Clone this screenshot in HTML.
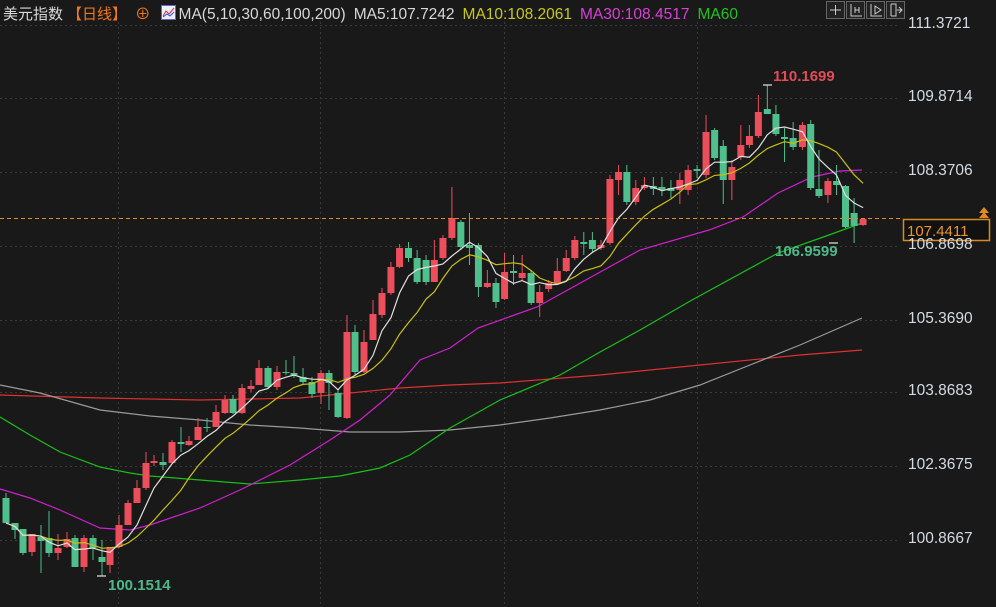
<!DOCTYPE html>
<html><head><meta charset="utf-8">
<style>
html,body{margin:0;padding:0;background:#191919;width:996px;height:607px;overflow:hidden;}
body{position:relative;font-family:"Liberation Sans","Noto Sans CJK SC",sans-serif;}
.hdr{position:absolute;left:3px;top:2px;font-size:15.5px;color:#d8d8d8;white-space:nowrap;letter-spacing:0;}
.hdr span{margin-right:8px}
.ax{position:absolute;left:908px;font-size:15.5px;color:#d4dbe2;}
</style></head><body>
<svg id="c" width="996" height="607" style="position:absolute;left:0;top:0">
<g stroke="#3a3a3a" stroke-dasharray="2,3" stroke-width="1">
<line x1="0" y1="25.5" x2="900" y2="25.5"/><line x1="0" y1="98.5" x2="900" y2="98.5"/>
<line x1="0" y1="172.5" x2="900" y2="172.5"/><line x1="0" y1="246.5" x2="900" y2="246.5"/>
<line x1="0" y1="320.5" x2="900" y2="320.5"/><line x1="0" y1="392.5" x2="900" y2="392.5"/>
<line x1="0" y1="466.5" x2="900" y2="466.5"/><line x1="0" y1="540.5" x2="900" y2="540.5"/>
<line x1="118.5" y1="22" x2="118.5" y2="607"/><line x1="320.5" y1="22" x2="320.5" y2="607"/>
<line x1="504.5" y1="22" x2="504.5" y2="607"/><line x1="697.5" y1="22" x2="697.5" y2="607"/>
</g>
<g id="ma" fill="none" stroke-width="1.2">
<polyline stroke="#e03030" points="0,395 100,398 200,400 300,398 400,388 450,385 500,383 600,375 700,365 800,355 862,350"/>
<polyline stroke="#9a9a9a" points="0,385 40,393 100,410 150,416 200,420 250,425 300,428 350,432 400,432 450,430 500,425 550,418 600,410 650,400 700,385 750,365 800,345 862,318"/>
<polyline stroke="#18c018" points="0,417 30,435 60,452 100,467 130,473 150,476 200,480 250,484 300,480 340,476 380,468 410,455 450,428 500,400 560,375 600,352 640,330 692,300 778,253 829,235 862,223"/>
<polyline stroke="#d020d0" points="0,489 30,498 60,510 100,528 130,530 150,525 200,508 240,490 290,465 330,440 360,420 390,395 420,360 450,348 478,328 537,307 640,250 709,230 743,217 778,193 812,177 840,171 862,170"/>
</g>
<g id="cd"></g>
<line x1="0" y1="218.5" x2="903" y2="218.5" stroke="#e08a20" stroke-dasharray="4,3" stroke-width="1"/>
<rect x="903.5" y="219.5" width="86" height="21" fill="#111" stroke="#d88a20" stroke-width="1.5"/>
<text x="907" y="236" font-family="Liberation Sans" font-size="15" fill="#e8962a">107.4411</text>
<path d="M979,213 L984,207 L989,213 Z M979,218 L984,212 L989,218 Z" fill="#e08a20"/>
<text x="773" y="81" font-family="Liberation Sans" font-size="15" font-weight="bold" fill="#e04c58">110.1699</text>
<text x="775" y="256" font-family="Liberation Sans" font-size="15" font-weight="bold" fill="#4fb88a">106.9599</text>
<text x="108" y="590" font-family="Liberation Sans" font-size="15" font-weight="bold" fill="#4fb88a">100.1514</text>
<path d="M763,85 H772 M838,243 H829 M97,576 H106" stroke="#ddd" stroke-width="1.2"/>
<g stroke="#666" fill="#222">
<rect x="826.5" y="1.5" width="18" height="17"/><rect x="846.5" y="1.5" width="18" height="17"/>
<rect x="866.5" y="1.5" width="18" height="17"/><rect x="886.5" y="1.5" width="18" height="17"/>
</g>
<g stroke="#ccc" stroke-width="1" fill="none">
<path d="M835.5,5 V15 M830,10 H841"/>
<path d="M851,4 V16 H862 M855,7 V13 M859,7 V13 M855,10 H859"/>
<path d="M871,4 V16 H882 M875,6 L881,10 L875,14 Z"/>
<path d="M891,4 V16 M891,4 H896 V16 H891 M897,10 H902 M899,7 L902,10 L899,13"/>
</g>
</svg>
<div class="hdr"><span style="font-size:15px">美元指数</span><span style="color:#f07818;margin-left:-4px;font-size:15px">【日线】</span><span style="color:#f07818;margin-right:10px">⊕</span><span style="display:inline-block;width:13px;height:13px;background:#eef;border:1px solid #66c;vertical-align:-1px;margin-right:3px;position:relative"><svg width="13" height="13" style="position:absolute;left:0;top:0"><path d="M1,10 L4,5 L7,8 L12,2" stroke="#e03030" fill="none"/><path d="M1,11 L5,8 L8,10 L12,6" stroke="#3050e0" fill="none"/></svg></span><span>MA(5,10,30,60,100,200)</span><span>MA5:107.7242</span><span style="color:#c8c818">MA10:108.2061</span><span style="color:#d840d8">MA30:108.4517</span><span style="color:#20c020">MA60</span></div>
<div class="ax" style="top:15px">111.3721</div>
<div class="ax" style="top:88px">109.8714</div>
<div class="ax" style="top:162px">108.3706</div>
<div class="ax" style="top:236px">106.8698</div>
<div class="ax" style="top:310px">105.3690</div>
<div class="ax" style="top:382px">103.8683</div>
<div class="ax" style="top:456px">102.3675</div>
<div class="ax" style="top:530px">100.8667</div>
<script>
var A=[[6,498,523,'g',493,523],[15,523,530,'g',523,539],[23,529,553,'g',529,555],[32,534,552,'r',534,556],[41,537,541,'g',525,573],[49,538,553,'g',511,557],[58,548,553,'r',534,560],[67,539,547,'r',532,548],[75,538,567,'g',535,567],[84,538,567,'r',535,572],[93,538,548,'g',535,560],[102,557,562,'g',540,576],[110,547,565,'r',547,573],[119,525,547,'r',515,548],[128,503,525,'r',500,525],[137,488,503,'r',480,503],[146,463,488,'r',452,490],[154,461,463,'r',455,466],[163,462,465,'g',453,470],[172,442,463,'r',440,463],[181,442,444,'g',427,452],[189,441,445,'r',436,446],[198,427,440,'r',418,440],[207,427,428,'g',418,432],[216,412,427,'r',405,427],[225,400,413,'r',395,414],[233,399,413,'g',395,414],[242,388,413,'r',384,414],[251,386,389,'r',380,392],[259,368,385,'r',360,385],[268,368,387,'g',366,389],[277,372,387,'r',366,390],[286,372,373,'g',360,375],[294,373,375,'g',356,378],[303,377,382,'g',368,385],[312,382,394,'g',377,398],[321,373,393,'r',370,404],[329,373,383,'g',370,410],[338,393,417,'g',390,418],[347,332,418,'r',315,419],[355,332,372,'g',325,375],[364,342,372,'r',330,373],[373,314,340,'r',300,340]];
var B=[[151,293,315,'r',288,318],[177,267,293,'r',262,295],[202,248,267,'r',244,268],[228,248,258,'g',242,262],[253,258,282,'g',250,284],[279,260,282,'g',255,285],[303,260,282,'r',240,282],[328,238,258,'r',235,260],[354,218,238,'r',187,240],[380,222,247,'g',220,250],[405,245,248,'g',213,265],[431,245,287,'g',243,297],[457,283,287,'r',270,288],[482,283,302,'g',278,308],[507,272,299,'r',253,300],[533,271,273,'g',255,285],[558,273,278,'r',255,280],[584,273,303,'g',270,305],[609,292,303,'r',285,317],[635,283,289,'r',280,292],[660,271,283,'r',258,285],[686,258,271,'r',250,272],[711,240,258,'r',236,260],[737,242,244,'g',232,255],[762,240,249,'g',232,252],[787,245,248,'r',240,250],[813,179,243,'r',175,245],[838,172,180,'r',165,195],[862,172,202,'g',165,205],[888,188,202,'r',180,205],[913,185,188,'r',177,190],[939,186,189,'g',177,195],[964,187,190,'g',177,196],[990,188,191,'g',180,198],[1016,180,190,'r',173,204],[1040,170,190,'r',165,195],[1066,169,171,'g',165,178],[1092,132,175,'r',115,178],[1117,130,158,'g',128,160],[1142,146,180,'g',140,204],[1167,167,180,'r',160,200],[1193,145,157,'r',125,160],[1218,136,145,'r',125,148],[1244,112,136,'r',95,138],[1270,109,114,'g',85,114],[1295,114,134,'g',105,136],[1320,137,139,'g',128,162],[1345,138,147,'g',122,150],[1372,125,147,'r',122,150],[1396,124,188,'g',120,190],[1420,189,196,'g',150,198],[1446,181,195,'r',178,203],[1471,181,185,'g',165,195],[1497,186,227,'g',185,228],[1522,213,226,'g',198,243],[1548,219,225,'r',219,226]];
B.forEach(function(b){b[0]=330+b[0]/2.904;A.push(b);});
var s='',cl=[];
A.forEach(function(c){var x=c[0],col=c[3]=='r'?'#ec4e5c':'#4fbf8c';var h=Math.max(1,c[2]-c[1]);
s+='<line x1="'+x+'" x2="'+x+'" y1="'+c[4]+'" y2="'+c[5]+'" stroke="'+col+'" stroke-width="1"/>';
s+='<rect x="'+(x-3.5)+'" y="'+c[1]+'" width="7" height="'+h+'" fill="'+col+'"/>';
cl.push(c[3]=='r'?c[1]:c[2]);});
function ma(n,color){var p=[];for(var i=0;i<cl.length;i++){var a=0,k=0;for(var j=Math.max(0,i-n+1);j<=i;j++){a+=cl[j];k++;}p.push(A[i][0].toFixed(1)+','+(a/k).toFixed(1));}
return '<polyline fill="none" stroke="'+color+'" stroke-width="1.2" points="'+p.join(' ')+'"/>';}
s+=ma(10,'#c8c010')+ma(5,'#e0e0e0');
document.getElementById('cd').innerHTML=s;
</script>
</body></html>
